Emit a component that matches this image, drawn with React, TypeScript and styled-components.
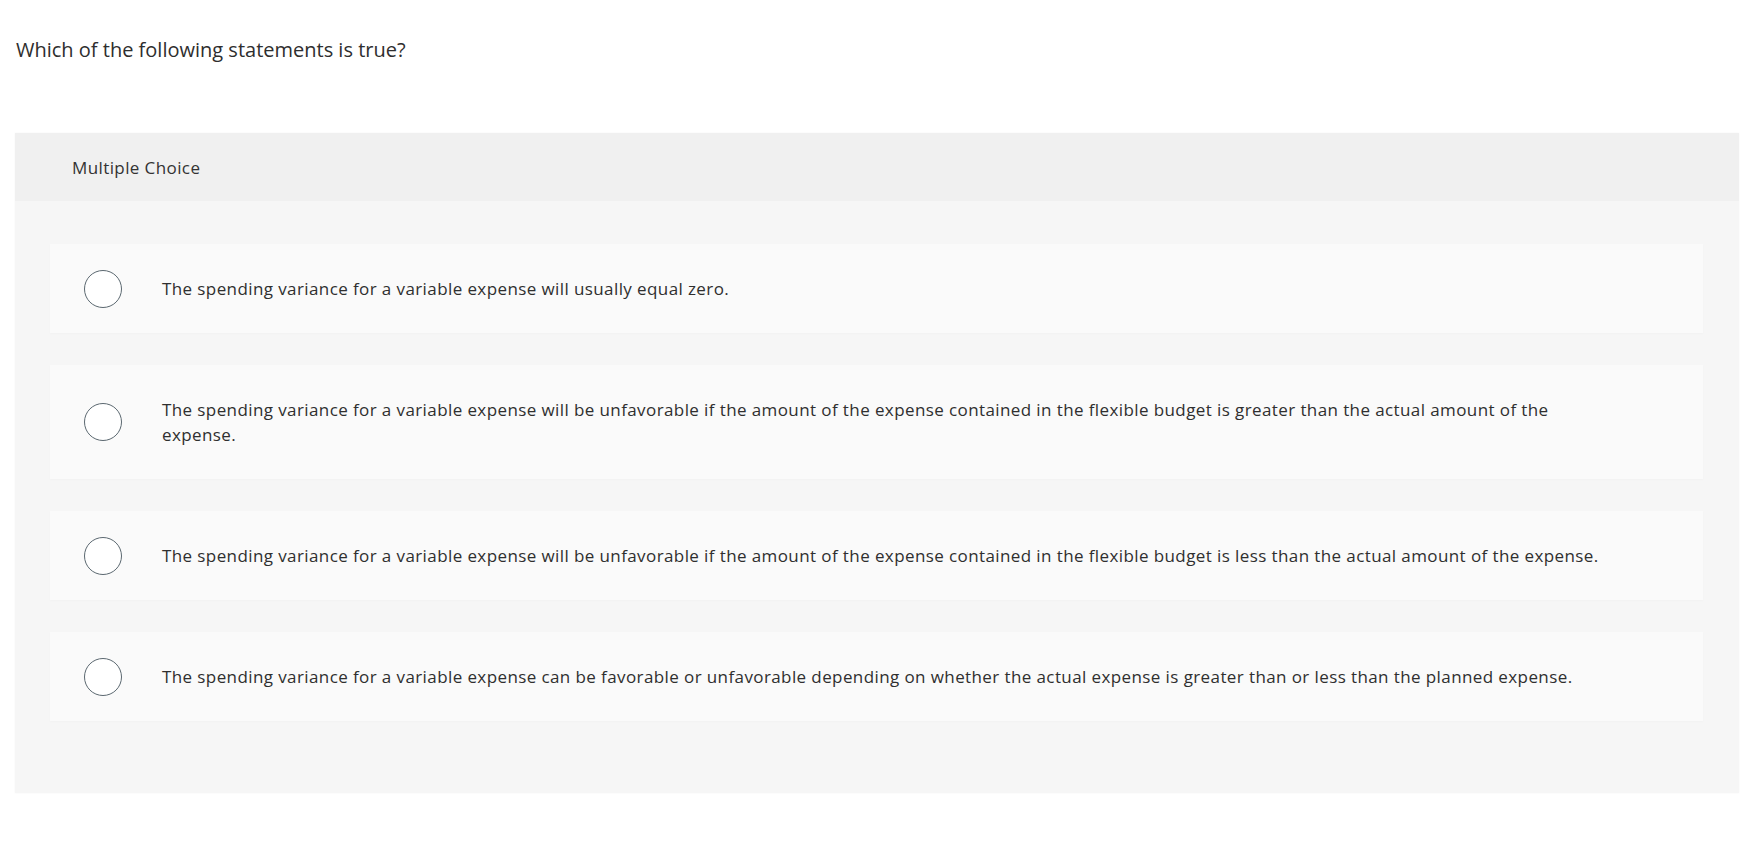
import styled, { createGlobalStyle } from 'styled-components'

const GlobalStyle = createGlobalStyle`
  html, body {
    margin: 0;
    padding: 0;
    background: #ffffff;
  }
  body {
    font-family: 'Open Sans', Lato, Arial, sans-serif;
    color: #333333;
  }
`

const options = [
  'The spending variance for a variable expense will usually equal zero.',
  'The spending variance for a variable expense will be unfavorable if the amount of the expense contained in the flexible budget is greater than the actual amount of the expense.',
  'The spending variance for a variable expense will be unfavorable if the amount of the expense contained in the flexible budget is less than the actual amount of the expense.',
  'The spending variance for a variable expense can be favorable or unfavorable depending on whether the actual expense is greater than or less than the planned expense.'
]

const App = () => (
  <Page>
    <GlobalStyle />
    <Prompt>Which of the following statements is true?</Prompt>
    <Question>
      <QuestionHeader>Multiple Choice</QuestionHeader>
      <OptionList>
        {options.map((text, key) => (
          <Option key={key}>
            <Radio type="radio" name="answer" id={`answer-${key}`} />
            <OptionLabel htmlFor={`answer-${key}`}>{text}</OptionLabel>
          </Option>
        ))}
      </OptionList>
    </Question>
  </Page>
)

export default App

const Page = styled.div`
  padding: 37px 14px 70px 15px;
`

const Prompt = styled.p`
  margin: 0 0 70px 1px;
  font-size: 20px;
  line-height: 26px;
  color: #2e2e2e;
`

const Question = styled.section`
  background: #f6f6f6;
  box-shadow: 0 0 2px rgba(0, 0, 0, 0.04);
`

const QuestionHeader = styled.div`
  display: flex;
  align-items: center;
  height: 68px;
  padding: 0 0 0 57px;
  background: #f0f0f0;
  font-size: 17px;
  letter-spacing: 0.4px;
  color: #333333;
`

const OptionList = styled.div`
  display: flex;
  flex-direction: column;
  gap: 32px;
  padding: 43px 36px 72px 35px;
`

const Option = styled.div`
  display: flex;
  align-items: center;
  padding: 0 100px 0 34px;
  background: #fafafa;
  box-shadow: 0 1px 2px rgba(0, 0, 0, 0.02);
`

const Radio = styled.input`
  appearance: none;
  flex: none;
  width: 38px;
  height: 38px;
  margin: 0 40px 0 0;
  border: 1.5px solid #5b6870;
  border-radius: 50%;
  background: #ffffff;
  cursor: pointer;
`

const OptionLabel = styled.label`
  padding: 32px 0;
  font-size: 17px;
  line-height: 25px;
  letter-spacing: 0.4px;
  color: #2f2f2f;
  cursor: pointer;
`
